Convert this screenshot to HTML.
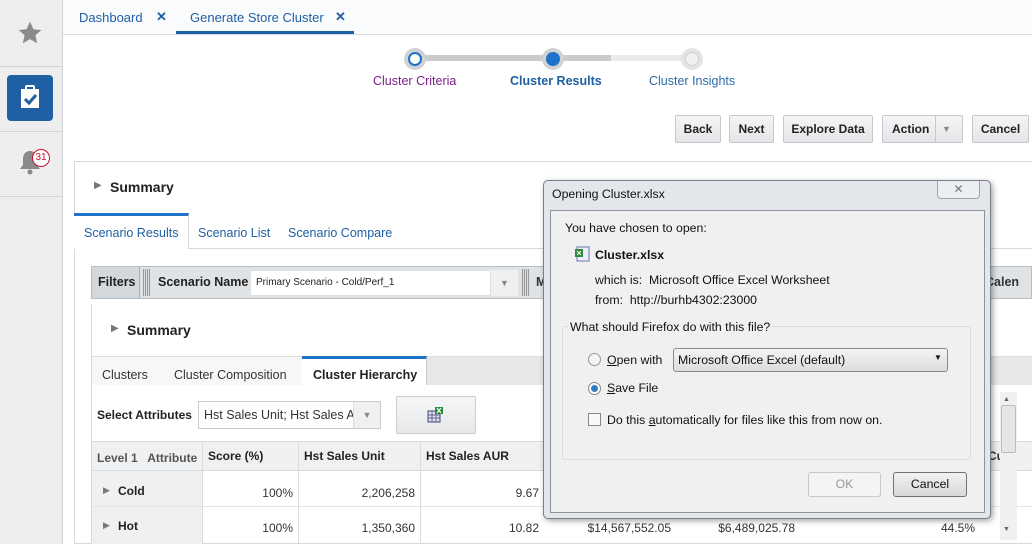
<!DOCTYPE html>
<html><head><meta charset="utf-8"><style>
*{box-sizing:border-box;margin:0;padding:0}
body{width:1032px;height:544px;overflow:hidden;background:#fff;font-family:"Liberation Sans",Arial,sans-serif;font-size:12px;color:#333;position:relative}
.a{position:absolute}
.btn{position:absolute;top:115px;height:28px;border:1px solid #c4c8cc;background:linear-gradient(#f4f5f6,#e3e5e7);font-weight:bold;font-size:12px;color:#222;text-align:center;line-height:26px;border-radius:2px}
.w7{font-family:"Liberation Sans",sans-serif;font-size:12.3px;color:#111}
th,td{font-size:12px}
</style></head><body>
<!-- sidebar -->
<div class="a" style="left:0;top:0;width:63px;height:544px;background:#eeeeee;border-right:1px solid #cfd2d5"></div>
<div class="a" style="left:0;top:66px;width:62px;height:1px;background:#d4d4d4"></div>
<div class="a" style="left:0;top:131px;width:62px;height:1px;background:#d4d4d4"></div>
<div class="a" style="left:0;top:196px;width:62px;height:1px;background:#d4d4d4"></div>
<svg class="a" style="left:17px;top:20px" width="26" height="26" viewBox="0 0 24 24"><path d="M12 1.5l3.2 7 7.3.7-5.5 4.9 1.6 7.4L12 17.7l-6.6 3.8 1.6-7.4L1.5 9.2l7.3-.7z" fill="#8a8a8a"/></svg>
<div class="a" style="left:7px;top:75px;width:46px;height:46px;background:#1f5fa3;border-radius:4px"></div>
<svg class="a" style="left:18px;top:84px" width="24" height="26" viewBox="0 0 24 26"><rect x="3" y="5" width="18" height="19" fill="#fff"/><rect x="8" y="2" width="8" height="5" rx="1" fill="none" stroke="#fff" stroke-width="2"/><path d="M7 15l4 4 7-8" fill="none" stroke="#1f5fa3" stroke-width="3"/></svg>
<svg class="a" style="left:17px;top:148px" width="26" height="28" viewBox="0 0 26 28"><path d="M13 3c-5 0-7 4-7 8v6l-3 4h20l-3-4v-6c0-4-2-8-7-8z" fill="#8a8a8a"/><circle cx="13" cy="24" r="2.5" fill="#8a8a8a"/></svg>
<div class="a" style="left:32px;top:149px;width:18px;height:18px;border:1px solid #c8102e;border-radius:50%;background:#fff;color:#c8102e;font-size:10px;text-align:center;line-height:16px">31</div>
<!-- top tabs -->
<div class="a" style="left:63px;top:0;width:969px;height:35px;border-bottom:1px solid #d5dbe0;background:#fafbfc"></div>
<div class="a" style="left:79px;top:10px;font-size:13px;color:#1f5fa3">Dashboard</div>
<div class="a" style="left:156px;top:9px;font-size:13px;color:#1f5fa3;font-weight:bold">✕</div>
<div class="a" style="left:190px;top:10px;font-size:13px;color:#1f5fa3">Generate Store Cluster</div>
<div class="a" style="left:335px;top:9px;font-size:13px;color:#1f5fa3;font-weight:bold">✕</div>
<div class="a" style="left:176px;top:31px;width:178px;height:3px;background:#1f5fa3"></div>
<!-- train -->
<div class="a" style="left:415px;top:55px;width:140px;height:6px;background:#c9cbcd"></div>
<div class="a" style="left:553px;top:55px;width:58px;height:6px;background:#c9cbcd"></div>
<div class="a" style="left:611px;top:55px;width:80px;height:6px;background:#ebebeb"></div>
<div class="a" style="left:404px;top:48px;width:22px;height:22px;border-radius:50%;background:#d0d2d4"></div>
<div class="a" style="left:408px;top:52px;width:14px;height:14px;border-radius:50%;background:#fff;border:2px solid #1f72c9"></div>
<div class="a" style="left:542px;top:48px;width:22px;height:22px;border-radius:50%;background:#d0d2d4"></div>
<div class="a" style="left:546px;top:52px;width:14px;height:14px;border-radius:50%;background:#1f72c9"></div>
<div class="a" style="left:681px;top:48px;width:22px;height:22px;border-radius:50%;background:#e3e4e5"></div>
<div class="a" style="left:685px;top:52px;width:14px;height:14px;border-radius:50%;background:#f0f1f2;border:1px solid #cfd1d3"></div>
<div class="a" style="left:373px;top:74px;font-size:12.5px;color:#7d1f8a">Cluster Criteria</div>
<div class="a" style="left:510px;top:74px;font-size:12.5px;color:#1f5fa3;font-weight:bold">Cluster Results</div>
<div class="a" style="left:649px;top:74px;font-size:12.5px;color:#2e6aa8">Cluster Insights</div>
<!-- buttons -->
<div class="btn" style="left:675px;width:46px">Back</div>
<div class="btn" style="left:729px;width:45px">Next</div>
<div class="btn" style="left:783px;width:90px">Explore Data</div>
<div class="btn" style="left:882px;width:81px;text-align:left;padding-left:9px">Action<span style="position:absolute;left:52px;top:0;width:1px;height:26px;background:#c4c8cc"></span><span style="position:absolute;left:59px;top:0;color:#888;font-size:9px">▼</span></div>
<div class="btn" style="left:972px;width:57px">Cancel</div>
<!-- outer panel -->
<div class="a" style="left:74px;top:161px;width:958px;height:383px;border:1px solid #d6dadd;border-right:none"></div>
<div class="a" style="left:94px;top:180px;font-size:10px;color:#777">▶</div>
<div class="a" style="left:110px;top:179px;font-size:14px;font-weight:bold;color:#222">Summary</div>
<div class="a" style="left:75px;top:214px;width:957px;height:35px;border-bottom:1px solid #d6dadd"></div>
<div class="a" style="left:74px;top:213px;width:115px;height:36px;border-top:3px solid #1f72c9;border-right:1px solid #d6dadd;background:#fff"></div>
<div class="a" style="left:84px;top:226px;font-size:12.5px;color:#1f5fa3">Scenario Results</div>
<div class="a" style="left:198px;top:226px;font-size:12.5px;color:#1f5fa3">Scenario List</div>
<div class="a" style="left:288px;top:226px;font-size:12.5px;color:#1f5fa3">Scenario Compare</div>
<!-- filters bar -->
<div class="a" style="left:91px;top:266px;width:941px;height:33px;background:#dfe3e6;border:1px solid #b9bec3"></div>
<div class="a" style="left:92px;top:267px;width:48px;height:31px;background:#d3d8dc;border-right:1px solid #a8aeb4"></div>
<div class="a" style="left:98px;top:275px;font-weight:bold;font-size:12.5px;color:#222">Filters</div>
<div class="a" style="left:143px;top:269px;width:7px;height:27px;background:repeating-linear-gradient(90deg,#999 0 1px,#ddd 1px 2px)"></div>
<div class="a" style="left:158px;top:275px;font-weight:bold;font-size:12.5px;color:#222">Scenario Name</div>
<div class="a" style="left:250px;top:270px;width:268px;height:26px;background:#fff;border:1px solid #e0e0e0"></div>
<div class="a" style="left:256px;top:277px;font-size:10px;color:#222">Primary Scenario - Cold/Perf_1</div>
<div class="a" style="left:490px;top:270px;width:28px;height:26px;background:#eef0f1;border-left:1px solid #ddd;color:#888;font-size:9px;text-align:center;line-height:26px">▼</div>
<div class="a" style="left:522px;top:269px;width:7px;height:27px;background:repeating-linear-gradient(90deg,#999 0 1px,#ddd 1px 2px)"></div>
<div class="a" style="left:536px;top:275px;font-weight:bold;font-size:12.5px">M</div>
<div class="a" style="left:985px;top:275px;font-weight:bold;font-size:12.5px">Calen</div>
<!-- inner summary -->
<div class="a" style="left:91px;top:304px;width:941px;height:240px;border-left:1px solid #d6dadd"></div>
<div class="a" style="left:111px;top:323px;font-size:10px;color:#777">▶</div>
<div class="a" style="left:127px;top:322px;font-size:14px;font-weight:bold;color:#222">Summary</div>
<div class="a" style="left:92px;top:356px;width:940px;height:29px;background:#e6e7e8;border-top:1px solid #ddd"></div>
<div class="a" style="left:92px;top:357px;width:210px;height:28px;background:#f7f7f7"></div>
<div class="a" style="left:302px;top:356px;width:125px;height:29px;background:#fff;border-top:3px solid #1f72c9;border-right:1px solid #ccc"></div>
<div class="a" style="left:102px;top:368px;font-size:12.5px;color:#333">Clusters</div>
<div class="a" style="left:174px;top:368px;font-size:12.5px;color:#333">Cluster Composition</div>
<div class="a" style="left:313px;top:368px;font-size:12.5px;color:#222;font-weight:bold">Cluster Hierarchy</div>
<div class="a" style="left:97px;top:408px;font-weight:bold;font-size:12px;color:#222">Select Attributes</div>
<div class="a" style="left:198px;top:401px;width:183px;height:28px;border:1px solid #ccc;background:#fff;overflow:hidden;white-space:nowrap;padding:6px 0 0 5px;font-size:12.5px">Hst Sales Unit; Hst Sales A</div>
<div class="a" style="left:353px;top:402px;width:27px;height:26px;background:#eef0f1;border-left:1px solid #ddd;color:#888;font-size:9px;text-align:center;line-height:26px">▼</div>
<div class="a" style="left:396px;top:396px;width:80px;height:38px;border:1px solid #ccc;background:linear-gradient(#f5f6f7,#e6e8ea);border-radius:2px"></div>
<svg class="a" style="left:427px;top:406px" width="18" height="18" viewBox="0 0 18 18"><rect x="1" y="5" width="12" height="11" fill="#dde" stroke="#447" stroke-width="1"/><path d="M1 9h12M1 12h12M5 5v11M9 5v11" stroke="#447" stroke-width=".7"/><rect x="8" y="1" width="8" height="7" fill="#2a8a3a"/><path d="M10 2l4 5M14 2l-4 5" stroke="#fff" stroke-width="1.2"/></svg>
<!-- table -->
<div class="a" style="left:92px;top:441px;width:940px;height:30px;background:#eef0f1;border-top:1px solid #d6dadd;border-bottom:1px solid #d6dadd"></div>
<div class="a" style="left:92px;top:471px;width:110px;height:73px;background:#eef0f1"></div>
<div class="a" style="left:92px;top:506px;width:940px;height:1px;background:#e4e4e4"></div>
<div class="a" style="left:202px;top:441px;width:1px;height:103px;background:#dcdcdc"></div>
<div class="a" style="left:298px;top:441px;width:1px;height:103px;background:#dcdcdc"></div>
<div class="a" style="left:420px;top:441px;width:1px;height:103px;background:#dcdcdc"></div>
<div class="a" style="left:97px;top:451px;color:#555;font-weight:bold;font-size:12px">Level 1 &nbsp; Attribute</div>
<div class="a" style="left:208px;top:449px;font-weight:bold;color:#222">Score (%)</div>
<div class="a" style="left:304px;top:449px;font-weight:bold;color:#222">Hst Sales Unit</div>
<div class="a" style="left:426px;top:449px;font-weight:bold;color:#222">Hst Sales AUR</div>
<div class="a" style="left:103px;top:485px;font-size:9px;color:#777">▶</div>
<div class="a" style="left:118px;top:484px;font-weight:bold;color:#222">Cold</div>
<div class="a" style="left:103px;top:520px;font-size:9px;color:#777">▶</div>
<div class="a" style="left:118px;top:519px;font-weight:bold;color:#222">Hot</div>
<div class="a" style="left:202px;top:486px;width:91px;text-align:right">100%</div>
<div class="a" style="left:298px;top:486px;width:117px;text-align:right">2,206,258</div>
<div class="a" style="left:420px;top:486px;width:119px;text-align:right">9.67</div>
<div class="a" style="left:202px;top:521px;width:91px;text-align:right">100%</div>
<div class="a" style="left:298px;top:521px;width:117px;text-align:right">1,350,360</div>
<div class="a" style="left:420px;top:521px;width:119px;text-align:right">10.82</div>
<div class="a" style="left:545px;top:521px;width:126px;text-align:right">$14,567,552.05</div>
<div class="a" style="left:680px;top:521px;width:115px;text-align:right">$6,489,025.78</div>
<div class="a" style="left:900px;top:521px;width:75px;text-align:right">44.5%</div>
<div class="a" style="left:988px;top:449px;font-weight:bold">Cu</div>
<!-- scrollbar -->
<div class="a" style="left:1000px;top:392px;width:17px;height:148px;background:#f0f0f0"></div>
<div class="a" style="left:1003px;top:396px;font-size:7px;color:#666">▲</div>
<div class="a" style="left:1001px;top:405px;width:15px;height:48px;background:#e6e6e6;border:1px solid #bbb;border-radius:2px"></div>
<div class="a" style="left:1003px;top:526px;font-size:7px;color:#666">▼</div>
<!-- dialog -->
<div class="a" style="left:543px;top:180px;width:448px;height:339px;background:#e3e7eb;border:1px solid #7a7f85;border-radius:5px;box-shadow:2px 2px 6px rgba(0,0,0,.35)"></div>
<div class="a w7" style="left:552px;top:187px">Opening Cluster.xlsx</div>
<div class="a" style="left:937px;top:181px;width:43px;height:18px;border:1px solid #a0a6ad;border-top:none;border-radius:0 0 4px 4px;background:#eceff2;text-align:center;color:#777;font-size:12px;line-height:17px">✕</div>
<div class="a" style="left:550px;top:210px;width:435px;height:303px;background:#f0f0f0;border:1px solid #8d9399"></div>
<div class="a w7" style="left:565px;top:221px">You have chosen to open:</div>
<svg class="a" style="left:574px;top:246px" width="16" height="16" viewBox="0 0 16 16"><rect x="3" y="1" width="12" height="14" fill="#eef" stroke="#67a"/><rect x="1" y="3" width="8" height="8" fill="#2a8a3a"/><path d="M3 5l4 4M7 5l-4 4" stroke="#fff"/></svg>
<div class="a w7" style="left:595px;top:248px;font-weight:bold">Cluster.xlsx</div>
<div class="a w7" style="left:595px;top:273px">which is:&nbsp; Microsoft Office Excel Worksheet</div>
<div class="a w7" style="left:595px;top:293px">from:&nbsp; http://burhb4302:23000</div>
<div class="a" style="left:562px;top:326px;width:409px;height:134px;border:1px solid #dcdcdc;border-radius:3px"></div>
<div class="a w7" style="left:568px;top:320px;background:#f0f0f0;padding:0 2px">What should Firefox do with this file?</div>
<div class="a" style="left:588px;top:353px;width:13px;height:13px;border-radius:50%;border:1px solid #999;background:#f4f4f4"></div>
<div class="a w7" style="left:607px;top:353px"><u>O</u>pen with</div>
<div class="a" style="left:673px;top:348px;width:275px;height:24px;border:1px solid #8a8a8a;border-radius:3px;background:linear-gradient(#f4f4f4,#dcdcdc)"></div>
<div class="a w7" style="left:678px;top:353px">Microsoft Office Excel (default)</div>
<div class="a" style="left:934px;top:353px;font-size:8px;color:#111">▼</div>
<div class="a" style="left:588px;top:382px;width:13px;height:13px;border-radius:50%;border:1px solid #888;background:#fff"></div>
<div class="a" style="left:591px;top:385px;width:7px;height:7px;border-radius:50%;background:#2f7fc0"></div>
<div class="a w7" style="left:607px;top:381px"><u>S</u>ave File</div>
<div class="a" style="left:588px;top:413px;width:13px;height:13px;border:1px solid #888;background:#f8f8f8"></div>
<div class="a w7" style="left:607px;top:413px">Do this <u>a</u>utomatically for files like this from now on.</div>
<div class="a" style="left:808px;top:472px;width:73px;height:25px;border:1px solid #c8c8c8;border-radius:3px;background:#f4f4f4;text-align:center;line-height:23px;color:#999;font-size:12.3px">OK</div>
<div class="a" style="left:893px;top:472px;width:74px;height:25px;border:1px solid #707070;border-radius:3px;background:linear-gradient(#f2f2f2,#d8d8d8);text-align:center;line-height:23px;color:#111;font-size:12.3px">Cancel</div>
</body></html>
